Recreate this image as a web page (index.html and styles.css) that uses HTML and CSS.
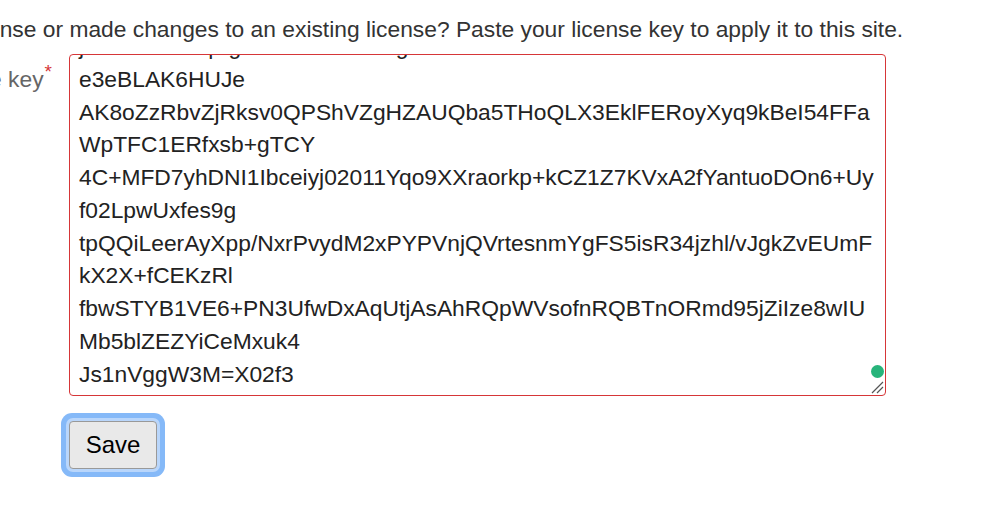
FILE: index.html
```html
<!DOCTYPE html>
<html lang="en">
  <head>
    <meta charset="UTF-8" />
    <meta name="viewport" content="width=device-width, initial-scale=1.0" />
    <title>License</title>
    <link rel="stylesheet" href="styles.css">
  </head>
  <body>
    <div class="page">
      <p class="intro">Purchased a new license or made changes to an existing license? Paste your license key to apply it to this site.</p>

      <form class="license-form">
        <div class="field-row">
          <label class="field-label" for="license-key">License key<span class="required">*</span></label>
          <div class="key-wrap">
            <div class="key-box" id="license-key">
              <div class="key-text">jT3xK0hZNAprgB5tWcL2mRsEgH0fX1dN6AzK4HxW7tR2eLmN0sB5vB9cF3hTkZ1u
e3eBLAK6HUJe
AK8oZzRbvZjRksv0QPShVZgHZAUQba5THoQLX3EklFERoyXyq9kBeI54FFa
WpTFC1ERfxsb+gTCY
4C+MFD7yhDNI1Ibceiyj02011Yqo9XXraorkp+kCZ1Z7KVxA2fYantuoDOn6+Uy
f02LpwUxfes9g
tpQQiLeerAyXpp/NxrPvydM2xPYPVnjQVrtesnmYgFS5isR34jzhl/vJgkZvEUmF
kX2X+fCEKzRl
fbwSTYB1VE6+PN3UfwDxAqUtjAsAhRQpWVsofnRQBTnORmd95jZiIze8wIU
Mb5blZEZYiCeMxuk4
Js1nVggW3M=X02f3</div>
            </div>
            <span class="grammar-dot"></span>
            <svg class="resize-grip" width="14" height="14" viewBox="0 0 14 14">
              <path d="M13 2 L2 13 M13 7 L7 13" stroke="#555" stroke-width="1.2" fill="none" />
            </svg>
          </div>
        </div>

        <div class="button-row">
          <button type="button" class="save-button">Save</button>
        </div>
      </form>
    </div>
  </body>
</html>
```

FILE: styles.css
```css
html {
  overflow: hidden;
}

body {
  margin: 0;
  padding: 17px 0 40px;
  font-family: "Liberation Sans", Arial, Helvetica, sans-serif;
  font-size: 22.8px;
  color: #333;
  background: #fff;
}

.page {
  margin-left: -217px;
}

.intro {
  margin: 0;
  line-height: 25px;
  white-space: nowrap;
}

.license-form {
  margin-top: 12px;
}

.field-row {
  display: grid;
  grid-template-columns: 269px 817px;
  column-gap: 17px;
  align-items: start;
}

.field-label {
  display: block;
  text-align: right;
  color: #666;
  padding-top: 13px;
  line-height: 25px;
}

.required {
  color: #d63638;
  font-size: 19px;
  line-height: 0;
  vertical-align: 9px;
  margin-left: 1px;
}

.key-wrap {
  position: relative;
}

.key-box {
  height: 340px;
  border: 1px solid #d63638;
  border-radius: 4px;
  overflow: hidden;
  color: #222;
}

.key-text {
  margin-top: -25px;
  padding: 0 9px;
  line-height: 32.75px;
  white-space: pre;
}

.grammar-dot {
  position: absolute;
  right: 2px;
  bottom: 18px;
  width: 13px;
  height: 13px;
  border-radius: 50%;
  background: #27b47b;
}

.resize-grip {
  position: absolute;
  right: 2px;
  bottom: 2px;
}

.button-row {
  padding: 25px 0 0 286px;
}

.save-button {
  width: 88px;
  height: 48px;
  font-family: "Liberation Sans", Arial, Helvetica, sans-serif;
  font-size: 24px;
  color: #000;
  background: #e9e9e9;
  border: 1px solid #999;
  border-radius: 4px;
  box-shadow: 0 0 0 3px #b9d6fb, 0 0 0 8px #85b9f8;
}
```
